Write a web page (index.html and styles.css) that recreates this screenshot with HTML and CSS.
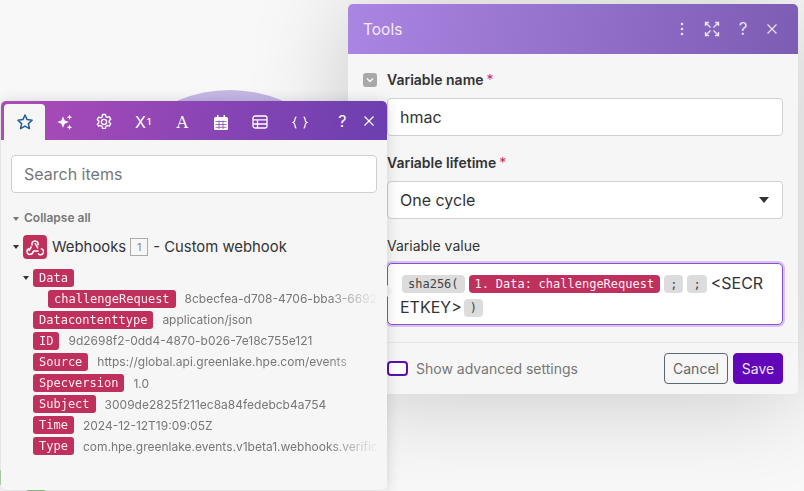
FILE: index.html
```html
<!DOCTYPE html>
<html lang="en">
<head>
    <meta charset="UTF-8">
    <meta name="viewport" content="width=device-width, initial-scale=1.0">
    <title>Tools</title>
    <link rel="stylesheet" href="styles.css">
</head>
<body>
    <div class="canvas">
        <div class="bubble"></div>
        <div class="green-edge"></div>
        <div class="green-foot"></div>

        <!-- Tools dialog -->
        <div class="dialog">
            <div class="dialog-head">
                <span class="dialog-title">Tools</span>
                <div class="head-icons">
                    <svg width="16" height="16" viewBox="0 0 16 16" fill="#e9e0f6"><circle cx="8" cy="3" r="1.3"/><circle cx="8" cy="8" r="1.3"/><circle cx="8" cy="13" r="1.3"/></svg>
                    <svg width="16" height="16" viewBox="0 0 16 16" fill="none" stroke="#e9e0f6" stroke-width="1.4"><path d="M1.500 5V1.500H5M11 1.500h3.500V5M1.500 11v3.500H5M11 14.500h3.500V11M2 2l4.500 4.500M14 2L9.500 6.500M2 14l4.500-4.500M14 14L9.500 9.500"/></svg>
                    <span class="head-q">?</span>
                    <svg width="14" height="14" viewBox="0 0 14 14" fill="none" stroke="#e9e0f6" stroke-width="1.3"><path d="M2.500 2.500l9 9M11.500 2.500l-9 9"/></svg>
                </div>
            </div>
            <div class="dialog-body">
                <div class="field-label">
                    <span class="collapse-box"><svg width="10" height="10" viewBox="0 0 10 10" fill="none" stroke="#fff" stroke-width="1.300"><path d="M2 3.500l3 3 3-3"/></svg></span>
                    <b>Variable name</b><span class="req">*</span>
                </div>
                <div class="text-input">hmac</div>

                <div class="field-label second"><b>Variable lifetime</b><span class="req">*</span></div>
                <div class="text-input select">One cycle<span class="select-arrow"></span></div>

                <div class="field-label third">Variable value</div>
                <div class="value-box">
                    <span class="pill gray first-pill">sha256(</span>
                    <span class="pill red">1. Data: challengeRequest</span>
                    <span class="pill gray">;</span>
                    <span class="pill gray">;</span>
                    &lt;SECR<wbr>ETKEY&gt;<span class="pill gray close-pill">)</span>
                </div>
            </div>
            <div class="dialog-foot">
                <div class="advanced"><span class="toggle"></span>Show advanced settings</div>
                <div class="buttons">
                    <span class="btn cancel">Cancel</span>
                    <span class="btn save">Save</span>
                </div>
            </div>
        </div>

        <!-- Mapping panel -->
        <div class="panel">
            <div class="tabs">
                <span class="tab active">
                    <svg width="18" height="18" viewBox="0 0 18 18" fill="none" stroke="#1f5f93" stroke-width="1.500" stroke-linejoin="round"><path d="M9 2l2.100 4.600 5 .6-3.700 3.400 1 5L9 13.100 4.600 15.600l1-5L1.900 7.200l5-.6z"/></svg>
                </span>
                <span class="tab">
                    <svg width="18" height="18" viewBox="0 0 18 18" fill="#fff"><path d="M7 3.500l1.700 4 4 1.600-4 1.600-1.700 4-1.700-4-4-1.600 4-1.600z"/><path d="M13.500 1.500l.8 2 2 .8-2 .8-.8 2-.8-2-2-.8 2-.8z"/><path d="M13.500 11.500l.8 1.900 1.900.8-1.900.8-.8 1.900-.8-1.900-1.900-.8 1.900-.8z"/></svg>
                </span>
                <span class="tab">
                    <svg width="18" height="18" viewBox="0 0 16 16" fill="none" stroke="#fff" stroke-width="1.200" stroke-linejoin="round"><path d="M6.700 1.300h2.600l.4 1.900 1.200.7 1.800-.6 1.300 2.200-1.400 1.300v1.400l1.400 1.300-1.300 2.200-1.800-.6-1.200.7-.4 1.900H6.700l-.4-1.900-1.200-.7-1.800.6L2 9.900l1.400-1.300V7.200L2 5.900l1.300-2.200 1.800.6 1.200-.7z"/><circle cx="8" cy="7.900" r="2.300"/></svg>
                </span>
                <span class="tab tab-text">X<sup>1</sup></span>
                <span class="tab tab-serif">A</span>
                <span class="tab">
                    <svg width="14" height="15" viewBox="0 0 14 15" fill="#fff"><path d="M3 0h1.500v2H9.500V0H11v2h1.500A1.500 1.500 0 0 1 14 3.500v10a1.500 1.500 0 0 1-1.500 1.500h-11A1.500 1.500 0 0 1 0 13.500v-10A1.500 1.500 0 0 1 1.500 2H3z"/><path d="M1.500 6.500h11M1.500 9.500h11M1.500 12.300h11M5 5.500V14M9 5.500V14" stroke="#8a45b2" stroke-width=".8"/></svg>
                </span>
                <span class="tab tab-table">
                    <svg width="16" height="14" viewBox="0 0 16 14" fill="none" stroke="#fff" stroke-width="1.300"><rect x="1" y="1" width="14" height="12" rx="2"/><path d="M1 4.800h14M1 9h14M5.500 4.800V13"/></svg>
                </span>
                <span class="tab">
                    <svg width="16" height="13" viewBox="0 0 16 13" fill="none" stroke="#fff" stroke-width="1.200"><path d="M4.500 1C3 1 3 2 3 3.500 3 5 2.500 6 1 6.500 2.500 7 3 8 3 9.500 3 11 3 12 4.500 12M11.500 1C13 1 13 2 13 3.500 13 5 13.500 6 15 6.500 13.500 7 13 8 13 9.500 13 11 13 12 11.500 12"/></svg>
                </span>
                <span class="tab-end">
                    <span class="tab-q">?</span>
                    <svg width="12" height="12" viewBox="0 0 12 12" fill="none" stroke="#fff" stroke-width="1.200"><path d="M1.500 1.500l9 9M10.500 1.500l-9 9"/></svg>
                </span>
            </div>
            <div class="panel-body">
                <div class="search">Search items</div>
                <div class="collapse"><span class="caret small"></span>Collapse all</div>
                <div class="module">
                    <span class="caret"></span>
                    <span class="module-icon">
                        <svg width="18" height="18" viewBox="0 0 18 18" fill="none" stroke="#fff" stroke-width="1.500"><path d="M6.300 7.500A3.100 3.100 0 1 1 11.700 7.500M5.500 8.500L2.900 12.800M8.900 5L12 10.500M14.800 10.800A3 3 0 1 1 12 15.400M12.500 13H7M3.200 10.500A3 3 0 1 0 7 13"/></svg>
                    </span>
                    <span>Webhooks</span>
                    <span class="module-num">1</span>
                    <span>- Custom webhook</span>
                </div>
                <div class="tree">
                    <div class="row"><span class="caret"></span><span class="pill red">Data</span></div>
                    <div class="row nested"><span class="pill red">challengeRequest</span><span class="val">8cbecfea-d708-4706-bba3-6692</span></div>
                    <div class="row"><span class="pill red">Datacontenttype</span><span class="val">application/json</span></div>
                    <div class="row"><span class="pill red">ID</span><span class="val">9d2698f2-0dd4-4870-b026-7e18c755e121</span></div>
                    <div class="row"><span class="pill red">Source</span><span class="val">https://global.api.greenlake.hpe.com/events</span></div>
                    <div class="row"><span class="pill red">Specversion</span><span class="val">1.0</span></div>
                    <div class="row"><span class="pill red">Subject</span><span class="val">3009de2825f211ec8a84fedebcb4a754</span></div>
                    <div class="row"><span class="pill red">Time</span><span class="val">2024-12-12T19:09:05Z</span></div>
                    <div class="row"><span class="pill red">Type</span><span class="val">com.hpe.greenlake.events.v1beta1.webhooks.verific</span></div>
                </div>
            </div>
        </div>
    </div>
</body>
</html>
```

FILE: styles.css
```css
* {
    box-sizing: border-box;
}

html, body {
    margin: 0;
    padding: 0;
    height: 100%;
    overflow: hidden;
}

body {
    font-family: Inter, "Liberation Sans", sans-serif;
    color: #333;
    background-color: #f8f8f8;
}

.canvas {
    position: relative;
    width: 804px;
    height: 491px;
    overflow: hidden;
    background-color: #f8f8f8;
}

.bubble {
    position: absolute;
    left: 97px;
    top: 90px;
    width: 266px;
    height: 266px;
    border-radius: 50%;
    background-color: #c5b7e5;
}

.green-edge {
    position: absolute;
    left: 0;
    top: 470px;
    width: 2px;
    height: 15px;
    background-color: #b5d8b0;
}

.green-foot {
    position: absolute;
    left: 24px;
    top: 489px;
    width: 24px;
    height: 8px;
    border-radius: 50%;
    background-color: #8fc98f;
}

/* Tools dialog */
.dialog {
    position: absolute;
    left: 348px;
    top: 4px;
    width: 450px;
    height: 390px;
    background-color: #f6f6f6;
    border-radius: 5px;
    box-shadow: 0 4px 100px rgba(0, 0, 0, 0.2);
    overflow: hidden;
}

.dialog-head {
    display: flex;
    align-items: center;
    justify-content: space-between;
    height: 50px;
    padding: 0 19px 0 15px;
    background: linear-gradient(100deg, #aa85e2 0, #7d5cb4 100%);
    color: #f1ebfa;
}

.dialog-title {
    font-size: 15.500px;
}

.head-icons {
    display: flex;
    align-items: center;
    gap: 14px;
}

.head-q {
    width: 16px;
    margin-left: 1px;
    text-align: center;
    font-size: 17px;
    color: #e9e0f6;
}

.dialog-body {
    padding: 16px 15px 0 39px;
    height: 288px;
}

.field-label {
    position: relative;
    font-size: 14px;
    line-height: 20px;
    color: #333;
}

.field-label b {
    font-weight: 600;
}

.req {
    color: #d0315c;
    margin-left: 3px;
}

.collapse-box {
    position: absolute;
    left: -24px;
    top: 3px;
    width: 14px;
    height: 14px;
    border-radius: 3px;
    background-color: #a8a8a8;
    display: flex;
    align-items: center;
    justify-content: center;
}

.text-input {
    position: relative;
    height: 38px;
    margin-top: 8px;
    padding: 0 12px;
    font-size: 16px;
    line-height: 37px;
    background-color: #fff;
    border: 1px solid #d0d0d0;
    border-radius: 4px;
}

.second {
    margin-top: 17px;
}

.select-arrow {
    position: absolute;
    right: 13px;
    top: 15px;
    border-left: 5px solid transparent;
    border-right: 5px solid transparent;
    border-top: 6px solid #333;
}

.third {
    margin-top: 17px;
}

.value-box {
    position: relative;
    margin-top: 7px;
    width: 396px;
    height: 62px;
    padding: 7px 12px;
    font-size: 16px;
    line-height: 24px;
    word-spacing: -0.5px;
    background-color: #fff;
    border: 1px solid #8c4fc9;
    border-radius: 5px;
    box-shadow: 0 0 0 2px #d7c2f2;
    word-break: break-all;
}

/* little pointer of the mapping panel, sits on the box edge */
.value-box::before {
    content: "";
    position: absolute;
    left: -1px;
    top: 21px;
    border-top: 6px solid transparent;
    border-bottom: 6px solid transparent;
    border-left: 6px solid #f6f6f6;
}

.pill {
    display: inline-block;
    height: 18px;
    padding: 0 6px;
    font-family: "DejaVu Sans Mono", monospace;
    font-size: 12px;
    line-height: 18px;
    border-radius: 3px;
    word-break: normal;
    white-space: nowrap;
}

.value-box .pill {
    border-radius: 4px;
    vertical-align: 1px;
}

.pill.red {
    background-color: #c0305c;
    color: #fdeef3;
}

.pill.gray {
    background-color: #dcdcdc;
    color: #444;
}

.first-pill {
    margin-left: 2px;
}

.close-pill {
    margin-left: 2px;
}

.dialog-foot {
    display: flex;
    align-items: center;
    justify-content: space-between;
    height: 52px;
    padding: 0 15px 0 39px;
    border-top: 1px solid #e6e6e6;
}

.advanced {
    display: flex;
    align-items: center;
    gap: 8px;
    font-size: 14px;
    color: #777;
}

.toggle {
    width: 21px;
    height: 15px;
    border: 2px solid #5a0fb0;
    border-radius: 4px;
    background-color: #fff;
}

.buttons {
    display: flex;
    gap: 5px;
}

.btn {
    height: 31px;
    font-size: 14px;
    line-height: 29px;
    text-align: center;
    border-radius: 4px;
    border: 1px solid #5e6670;
    color: #666;
}

.btn.cancel {
    width: 64px;
}

.btn.save {
    width: 50px;
    background-color: #6106b8;
    border-color: #6106b8;
    color: #eee3fa;
}

/* Mapping panel */
.panel {
    position: absolute;
    left: 1px;
    top: 101px;
    width: 386px;
    height: 389px;
    background-color: #f6f6f6;
    border-radius: 5px;
    box-shadow: 0 1px 14px rgba(0, 0, 0, 0.16);
    overflow: hidden;
}

.tabs {
    display: flex;
    align-items: flex-end;
    height: 39px;
    padding-left: 3px;
    color: #fff;
    background: linear-gradient(95deg, #ac4cb8 0, #6c3fb0 100%);
}

.tab {
    display: flex;
    align-items: center;
    justify-content: center;
    width: 39.200px;
    height: 36px;
    flex-shrink: 0;
}

.tab.active {
    width: 41px;
    background-color: #f6f6f6;
    border-radius: 4px 4px 0 0;
}

.tab-table svg {
    margin-right: 2px;
}

.tab-text {
    font-size: 16px;
}

.tab-text sup {
    font-size: 9px;
    font-weight: 600;
    line-height: 0;
    margin-left: 1px;
}

.tab-serif {
    font-family: "DejaVu Serif", serif;
    font-size: 16px;
}

.tab-end {
    display: flex;
    align-items: center;
    gap: 16px;
    height: 36px;
    margin-left: 19px;
    padding-bottom: 2px;
}

.tab-q {
    font-size: 16px;
}

.panel-body {
    padding: 15px 10px 0;
}

.search {
    height: 38px;
    padding: 0 12px;
    font-size: 16px;
    line-height: 37px;
    color: #777;
    background-color: #fff;
    border: 1px solid #cfcfcf;
    border-radius: 4px;
}

.caret {
    display: inline-block;
    border-left: 3px solid transparent;
    border-right: 3px solid transparent;
    border-top: 4px solid #333;
}

.caret.small {
    border-left-width: 3px;
    border-right-width: 3px;
    border-top-color: #777;
    margin: 0 5px 1px 2px;
}

.collapse {
    margin-top: 17px;
    font-size: 12px;
    line-height: 16px;
    font-weight: 600;
    color: #777;
}

.module {
    display: flex;
    align-items: center;
    gap: 5px;
    margin-top: 9px;
    font-size: 14.850px;
    line-height: 24px;
    color: #333;
}

.module .caret {
    margin-left: 2px;
    margin-right: -1px;
}

.module-icon {
    display: flex;
    align-items: center;
    justify-content: center;
    width: 24px;
    height: 24px;
    border-radius: 4px;
    background-color: #c0305c;
}

.module-num {
    width: 18px;
    height: 18px;
    margin-left: -1px;
    font-size: 11px;
    line-height: 16px;
    text-align: center;
    color: #888;
    border: 1px solid #aaa;
}

.tree {
    margin-top: 8px;
    -webkit-mask-image: linear-gradient(90deg, #000 315px, transparent 368px);
    mask-image: linear-gradient(90deg, #000 315px, transparent 368px);
}

.row {
    position: relative;
    display: flex;
    align-items: center;
    height: 21.100px;
    padding-left: 22px;
    white-space: nowrap;
}

.row > .caret {
    position: absolute;
    left: 12px;
    top: 9px;
}

.nested {
    padding-left: 37px;
}

.val {
    margin-left: 9px;
    font-size: 12px;
    color: #777;
}
```
